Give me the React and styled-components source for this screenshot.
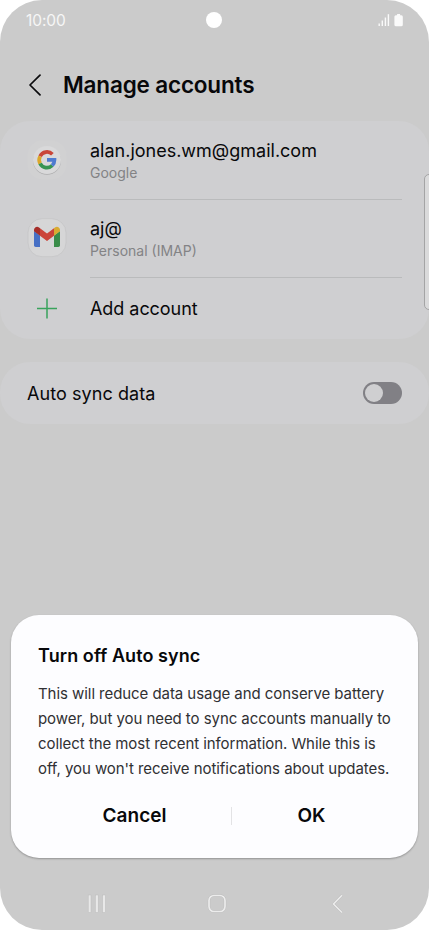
import React from 'react'
import styled, { createGlobalStyle, css } from 'styled-components'

const GlobalStyle = createGlobalStyle`
  * {
    box-sizing: border-box;
  }

  body {
    margin: 0;
    background: #fff;
    font-family: Inter, 'Liberation Sans', sans-serif;
    color: #08080a;
  }

  button {
    font: inherit;
    color: inherit;
    background: none;
    border: none;
    padding: 0;
  }
`

const Phone = styled.div`
  position: relative;
  display: flex;
  flex-direction: column;
  width: 429px;
  height: 930px;
  border-radius: 42px;
  background: #cbcbcb;
  overflow: hidden;
`

const StatusBar = styled.header`
  display: grid;
  grid-template-columns: 1fr 16px 1fr;
  align-items: center;
  height: 40px;
  padding: 0 25px 0 26px;
  color: #f6f6f6;
`

const Clock = styled.span`
  font-size: 15.5px;
  letter-spacing: -0.1px;
`

const Camera = styled.span`
  width: 16px;
  height: 16px;
  margin-left: -1px;
  border-radius: 50%;
  background: #fff;
`

const StatusIcons = styled.div`
  display: flex;
  justify-content: flex-end;
`

const TitleBar = styled.div`
  display: flex;
  align-items: center;
  height: 81px;
  padding: 8px 28px 0;

  & svg {
    margin-right: 21px;
  }
`

const Title = styled.h1`
  margin: 0;
  font-size: 22.5px;
  font-weight: 600;
  letter-spacing: -0.17px;
  white-space: nowrap;
`

const Card = styled.section`
  background: #cfcfd1;
  border-radius: 30px;
  margin-bottom: 23px;
`

const Row = styled.div`
  display: flex;
  height: ${props => props.height}px;
  padding: 0 27px;
`

const IconCell = styled.div`
  display: flex;
  align-items: center;
  width: 63px;
  padding-bottom: ${props => props.lift || 0}px;
`

const RowBody = styled.div`
  display: flex;
  flex: 1;
  flex-direction: column;
  justify-content: center;

  ${props => props.divided && css`
    padding-top: 1px;
    border-bottom: 1px solid #babbbc;
  `}
`

const Label = styled.span`
  font-size: 18px;
  line-height: 25px;
  letter-spacing: ${props => props.spacing || 0}px;
  white-space: nowrap;
`

const Caption = styled.span`
  margin: -1px 0 1px;
  font-size: 14px;
  line-height: 21px;
  color: #838385;
`

const SyncRow = styled(Row)`
  align-items: center;
  justify-content: space-between;
`

const Switch = styled.button`
  display: flex;
  align-items: center;
  width: 39px;
  height: 22px;
  padding: 2px;
  border-radius: 11px;
  background: #818085;

  &:before {
    content: '';
    width: 18px;
    height: 18px;
    border-radius: 50%;
    background: #cfcfd1;
  }
`

const EdgeHandle = styled.div`
  position: absolute;
  top: 174px;
  right: -5px;
  width: 10px;
  height: 136px;
  border: 1px solid #a4a4a5;
  border-radius: 5px;
  background: #dadadb;
`

const Dialog = styled.div`
  position: absolute;
  top: 615px;
  left: 11px;
  width: 407px;
  height: 243px;
  padding: 28px 27px 0;
  border-radius: 28px;
  background: #fdfdff;
  box-shadow: 0 1px 2px rgba(0, 0, 0, 0.28);
`

const DialogTitle = styled.h2`
  margin: 0;
  font-size: 18px;
  line-height: 26px;
  font-weight: 600;
  letter-spacing: 0.08px;
`

const Message = styled.p`
  margin: 12px 0 0;
  font-size: 15px;
  line-height: 25px;
  letter-spacing: -0.06px;
  color: #303033;
  white-space: nowrap;
`

const Actions = styled.div`
  display: grid;
  grid-template-columns: 193px 1px 159px;
  align-items: center;
  height: 40px;
  margin-top: 14px;
`

const ActionButton = styled.button`
  font-size: 19px;
  font-weight: 600;
`

const Separator = styled.span`
  height: 18px;
  margin-top: 2px;
  background: #e3e3e5;
`

const NavBar = styled.nav`
  display: flex;
  align-items: center;
  justify-content: space-between;
  height: 52px;
  margin-top: auto;
  padding: 0 84px 0 86px;
`

const SignalIcon = () => (
  <svg width='27' height='14' viewBox='0 0 27 14' fill='#fafafa'>
    <rect x='1.5' y='10.5' width='1.4' height='2.5' />
    <rect x='4.6' y='7.5' width='1.4' height='5.5' />
    <rect x='7.7' y='4.5' width='1.4' height='8.5' />
    <rect x='10.7' y='1.2' width='1.4' height='11.8' />
    <path d='M20.1 1h3v1.3h1.2a1.5 1.5 0 0 1 1.5 1.5v8a1.5 1.5 0 0 1-1.5 1.5h-5.4a1.5 1.5 0 0 1-1.5-1.5v-8a1.5 1.5 0 0 1 1.5-1.5h1.2z' />
  </svg>
)

const BackIcon = () => (
  <svg width='14' height='22' viewBox='0 0 14 22' fill='none'>
    <path d='M12 1.2 2 11l10 9.8' stroke='#0b0b0d' strokeWidth='1.7' strokeLinecap='round' strokeLinejoin='round' />
  </svg>
)

const GoogleIcon = () => (
  <svg width='40' height='40' viewBox='0 0 40 40'>
    <rect x='0.5' y='0.5' width='39' height='39' rx='15' fill='#d1d1d2' />
    <circle cx='20' cy='20.8' r='14' fill='#adadae' />
    <circle cx='20' cy='20' r='14' fill='#d9d9da' />
    <g fill='none' strokeWidth='3.7'>
      <path d='M25.4 14.3A7.6 7.6 0 0 0 13.1 16.3' stroke='#c94638' />
      <path d='M13.1 16.3a7.6 7.6 0 0 0 0 7.2' stroke='#dca72b' />
      <path d='M13.1 23.5a7.6 7.6 0 0 0 12.1 2' stroke='#379451' />
      <path d='M20 19.9h7.5a7.6 7.6 0 0 1-2.3 5.6' stroke='#4f7bd0' />
    </g>
  </svg>
)

const GmailIcon = () => (
  <svg width='40' height='40' viewBox='0 0 40 40'>
    <rect x='1' y='0.7' width='38' height='38' rx='14' fill='#d6d6d7' stroke='#c5c5c7' strokeWidth='0.8' />
    <path d='M7 13v14.3c0 1 .8 1.7 1.7 1.7H13V17.5z' fill='#4770c5' />
    <path d='M27 17.5V29h4.3c1 0 1.7-.8 1.7-1.7V13z' fill='#398c49' />
    <path d='M7 13.2v-1.3c0-2.6 3-4.1 5-2.5l1 .8v7.5z' fill='#a62e29' />
    <path d='M27 17.7v-7.5l1-.8c2-1.6 5-.1 5 2.5v1.3z' fill='#d9ab31' />
    <path d='m13 10.2 7 5.3 7-5.3v7.5L20 23l-7-5.3z' fill='#cb4439' />
  </svg>
)

const PlusIcon = () => (
  <svg width='40' height='40' viewBox='0 0 40 40'>
    <path d='M20 9.5v20M10 19.5h20' stroke='#39a35c' strokeWidth='1.5' />
  </svg>
)

const RecentsIcon = () => (
  <svg width='22' height='22' viewBox='0 0 22 22'>
    <g fill='#e8e8e8' stroke='#bbb' strokeWidth='0.5'>
      <rect x='2.2' y='2' width='2.8' height='17.5' />
      <rect x='9.4' y='2' width='2.8' height='17.5' />
      <rect x='16.6' y='2' width='2.8' height='17.5' />
    </g>
  </svg>
)

const HomeIcon = () => (
  <svg width='22' height='22' viewBox='0.5 0 22 22' fill='none'>
    <rect x='2.5' y='2.5' width='16' height='16' rx='5' stroke='#bbb' strokeWidth='2.5' />
    <rect x='2.5' y='2.5' width='16' height='16' rx='5' stroke='#ececec' strokeWidth='1.7' />
  </svg>
)

const NavBackIcon = () => (
  <svg width='17' height='22' viewBox='-3 0 17 22' fill='none'>
    <path d='M11 2.2 2.5 11l8.5 8.5' stroke='#bbb' strokeWidth='2.4' />
    <path d='M11 2.2 2.5 11l8.5 8.5' stroke='#ececec' strokeWidth='1.6' />
  </svg>
)

const App = () => {
  return (
    <>
      <GlobalStyle />
      <Phone>
        <StatusBar>
          <Clock>10:00</Clock>
          <Camera />
          <StatusIcons>
            <SignalIcon />
          </StatusIcons>
        </StatusBar>
        <TitleBar>
          <BackIcon />
          <Title>Manage accounts</Title>
        </TitleBar>
        <Card>
          <Row height={79}>
            <IconCell lift={2}><GoogleIcon /></IconCell>
            <RowBody divided>
              <Label>alan.jones.wm@gmail.com</Label>
              <Caption>Google</Caption>
            </RowBody>
          </Row>
          <Row height={78}>
            <IconCell lift={2}><GmailIcon /></IconCell>
            <RowBody divided>
              <Label>aj@</Label>
              <Caption>Personal (IMAP)</Caption>
            </RowBody>
          </Row>
          <Row height={61}>
            <IconCell><PlusIcon /></IconCell>
            <RowBody>
              <Label spacing={-0.05}>Add account</Label>
            </RowBody>
          </Row>
        </Card>
        <Card>
          <SyncRow height={62}>
            <Label spacing={0.07}>Auto sync data</Label>
            <Switch aria-label='Auto sync data' />
          </SyncRow>
        </Card>
        <NavBar>
          <RecentsIcon />
          <HomeIcon />
          <NavBackIcon />
        </NavBar>
        <EdgeHandle />
        <Dialog role='dialog'>
          <DialogTitle>Turn off Auto sync</DialogTitle>
          <Message>
            This will reduce data usage and conserve battery<br />
            power, but you need to sync accounts manually to<br />
            collect the most recent information. While this is<br />
            off, you won't receive notifications about updates.
          </Message>
          <Actions>
            <ActionButton>Cancel</ActionButton>
            <Separator />
            <ActionButton>OK</ActionButton>
          </Actions>
        </Dialog>
      </Phone>
    </>
  )
}

export default App
